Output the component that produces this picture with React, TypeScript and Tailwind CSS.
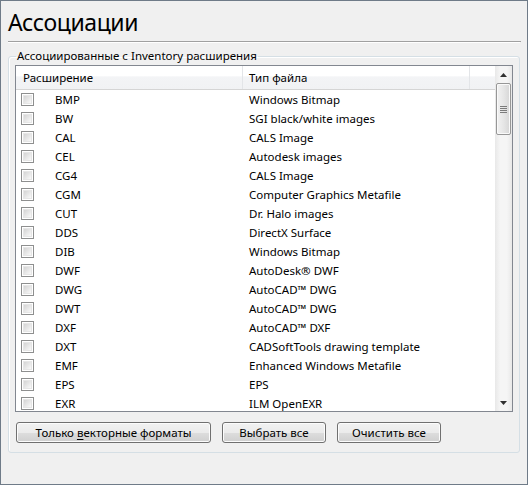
const rows: [string, string][] = [
  ["BMP", "Windows Bitmap"],
  ["BW", "SGI black/white images"],
  ["CAL", "CALS Image"],
  ["CEL", "Autodesk images"],
  ["CG4", "CALS Image"],
  ["CGM", "Computer Graphics Metafile"],
  ["CUT", "Dr. Halo images"],
  ["DDS", "DirectX Surface"],
  ["DIB", "Windows Bitmap"],
  ["DWF", "AutoDesk® DWF"],
  ["DWG", "AutoCAD™ DWG"],
  ["DWT", "AutoCAD™ DWG"],
  ["DXF", "AutoCAD™ DXF"],
  ["DXT", "CADSoftTools drawing template"],
  ["EMF", "Enhanced Windows Metafile"],
  ["EPS", "EPS"],
  ["EXR", "ILM OpenEXR"],
];

const Checkbox = () => (
  <span className="block w-[13px] h-[13px] border border-[#8e8f8f] bg-white p-[1px]">
    <span className="block w-full h-full bg-gradient-to-br from-[#d4d4d4] to-[#f9f9f9] border border-[#e6e6e6]" />
  </span>
);

const Button = ({ children, w }: { children: React.ReactNode; w: string }) => (
  <button
    className={`${w} h-[21px] rounded-[3px] border border-[#707070] bg-[linear-gradient(#f2f2f2_0%,#ebebeb_50%,#dddddd_51%,#cfcfcf_100%)] shadow-[inset_0_0_0_1px_#fcfcfc] text-[11.5px] text-black leading-none flex items-center justify-center`}
  >
    {children}
  </button>
);

export default function App() {
  return (
    <div
      className="w-[528px] h-[485px] border border-[#6f7b88] bg-[#f0f0f0] overflow-hidden text-black"
      style={{ fontFamily: '"Segoe UI", "Noto Sans", sans-serif' }}
    >
      <div className="px-[7px] pt-[5px]">
        <h1 className="text-[23px] leading-[32px] font-normal tracking-[-0.4px]">Ассоциации</h1>
        <div className="mt-[3px] h-[1px] bg-[#a0a0a0] mr-[-1px]" />
        <div className="h-[1px] bg-white" />

        <fieldset className="mt-[6px] mx-0 border border-[#d5dfe5] rounded-[3px] shadow-[inset_1px_1px_0_#fff] px-[6px] pb-[9px] pt-0 min-w-0">
          <legend className="text-[11.5px] leading-[14px] px-[1px] ml-[1px]">Ассоциированные с Inventory расширения</legend>

          <div className="mt-[2px] h-[347px] border border-[#828790] bg-white flex">
            <div className="flex-1 min-w-0 flex flex-col overflow-hidden">
              <div className="h-[24px] shrink-0 flex border-b border-[#d5d5d5] bg-[linear-gradient(#ffffff_0%,#ffffff_45%,#f3f4f6_46%,#f1f2f4_100%)] text-[11.5px]">
                <div className="w-[227px] pl-[7px] flex items-center border-r border-[#e3e5e8]">Расширение</div>
                <div className="w-[227px] pl-[6px] flex items-center border-r border-[#e3e5e8]">Тип файла</div>
                <div className="flex-1" />
              </div>
              <div className="flex-1 overflow-hidden">
                {rows.map(([ext, type]) => (
                  <div key={ext} className="h-[19px] flex items-center text-[11.5px]">
                    <div className="w-[227px] flex items-center pl-[5px]">
                      <Checkbox />
                      <span className="ml-[21px]">{ext}</span>
                    </div>
                    <div className="pl-[6px] whitespace-nowrap">{type}</div>
                  </div>
                ))}
              </div>
            </div>

            <div className="w-[17px] shrink-0 flex flex-col bg-[linear-gradient(90deg,#e8e8e8,#f5f5f5_30%,#f5f5f5_70%,#e8e8e8)]">
              <div className="h-[17px] flex items-center justify-center">
                <svg width="7" height="4" viewBox="0 0 7 4">
                  <path d="M3.5 0 L7 4 L0 4 Z" fill="#303030" />
                </svg>
              </div>
              <div className="mx-[1px] h-[52px] rounded-[2px] border border-[#979797] bg-[linear-gradient(90deg,#f2f2f2,#e6e6e6_50%,#d6d6d6)] shadow-[inset_0_0_0_1px_#fafafa] flex flex-col items-center justify-center gap-[1px]">
                <span className="block w-[7px] h-[1px] bg-[#7b7b7b]" />
                <span className="block w-[7px] h-[1px] bg-[#7b7b7b]" />
                <span className="block w-[7px] h-[1px] bg-[#7b7b7b]" />
                <span className="block w-[7px] h-[1px] bg-[#7b7b7b]" />
              </div>
              <div className="flex-1" />
              <div className="h-[17px] flex items-center justify-center">
                <svg width="7" height="4" viewBox="0 0 7 4">
                  <path d="M0 0 L7 0 L3.5 4 Z" fill="#303030" />
                </svg>
              </div>
            </div>
          </div>

          <div className="mt-[10px] flex gap-[11px] pl-[1px]">
            <Button w="w-[195px]">
              <span>
                Только <span className="underline underline-offset-2">в</span>екторные форматы
              </span>
            </Button>
            <Button w="w-[104px]">Выбрать все</Button>
            <Button w="w-[104px]">Очистить все</Button>
          </div>
        </fieldset>
      </div>
    </div>
  );
}
